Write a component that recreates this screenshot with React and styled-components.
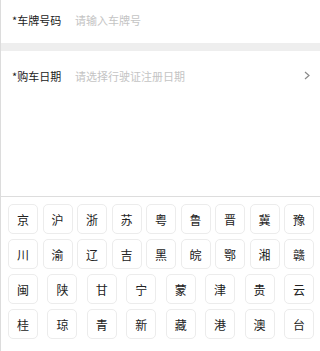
import React from 'react';
import styled, { createGlobalStyle } from 'styled-components';

const GlobalStyle = createGlobalStyle`
  html, body {
    margin: 0;
    padding: 0;
    background: #fff;
  }
  body {
    font-family: "Noto Sans CJK SC", "Noto Sans", sans-serif;
  }
`;

const Page = styled.div`
  height: 351px;
  display: flex;
  flex-direction: column;
  border-left: 1px solid #dcdcdc;
  box-sizing: border-box;
  background: #fff;
`;

const Form = styled.div`
  display: flex;
  flex-direction: column;
`;

const Field = styled.div`
  display: flex;
  align-items: center;
  height: ${(p) => p.height}px;
  padding: 0 10px 0 11px;
  padding-bottom: ${(p) => p.offset || 0}px;
  box-sizing: border-box;
  font-size: 11px;
  line-height: 14px;
`;

const Label = styled.span`
  width: 63px;
  flex-shrink: 0;
  color: #222;
`;

const Placeholder = styled.span`
  flex: 1;
  color: #c4c4c4;
`;

const Divider = styled.div`
  height: 8px;
  background: #eeeeee;
`;

const Spacer = styled.div`
  flex: 1;
`;

const Keyboard = styled.div`
  border-top: 1px solid #dddddd;
  padding: 7px 6px 12px 7px;
  display: flex;
  flex-direction: column;
  gap: 5px;
`;

const KeyRow = styled.div`
  display: flex;
  justify-content: space-between;
`;

const Key = styled.button`
  width: 30px;
  height: 30px;
  padding: 0;
  border: 1px solid #ececec;
  border-radius: 5px;
  background: #fff;
  font-family: inherit;
  font-size: 12px;
  color: #222;
  display: flex;
  align-items: center;
  justify-content: center;
`;

const Chevron = () => (
  <svg width="6" height="9" viewBox="0 0 6 9">
    <polyline points="1,1 5,4.5 1,8" fill="none" stroke="#8a8a8a" strokeWidth="1.2" />
  </svg>
);

const rows = [
  ['京', '沪', '浙', '苏', '粤', '鲁', '晋', '冀', '豫'],
  ['川', '渝', '辽', '吉', '黑', '皖', '鄂', '湘', '赣'],
  ['闽', '陕', '甘', '宁', '蒙', '津', '贵', '云'],
  ['桂', '琼', '青', '新', '藏', '港', '澳', '台'],
];

export default function App() {
  return (
    <>
      <GlobalStyle />
      <Page>
        <Form>
          <Field height={43} offset={4}>
            <Label>*车牌号码</Label>
            <Placeholder>请输入车牌号</Placeholder>
          </Field>
          <Divider />
          <Field height={49}>
            <Label>*购车日期</Label>
            <Placeholder>请选择行驶证注册日期</Placeholder>
            <Chevron />
          </Field>
        </Form>
        <Spacer />
        <Keyboard>
          {rows.map((row, i) => (
            <KeyRow key={i}>
              {row.map((k) => (
                <Key key={k}>{k}</Key>
              ))}
            </KeyRow>
          ))}
        </Keyboard>
      </Page>
    </>
  );
}
